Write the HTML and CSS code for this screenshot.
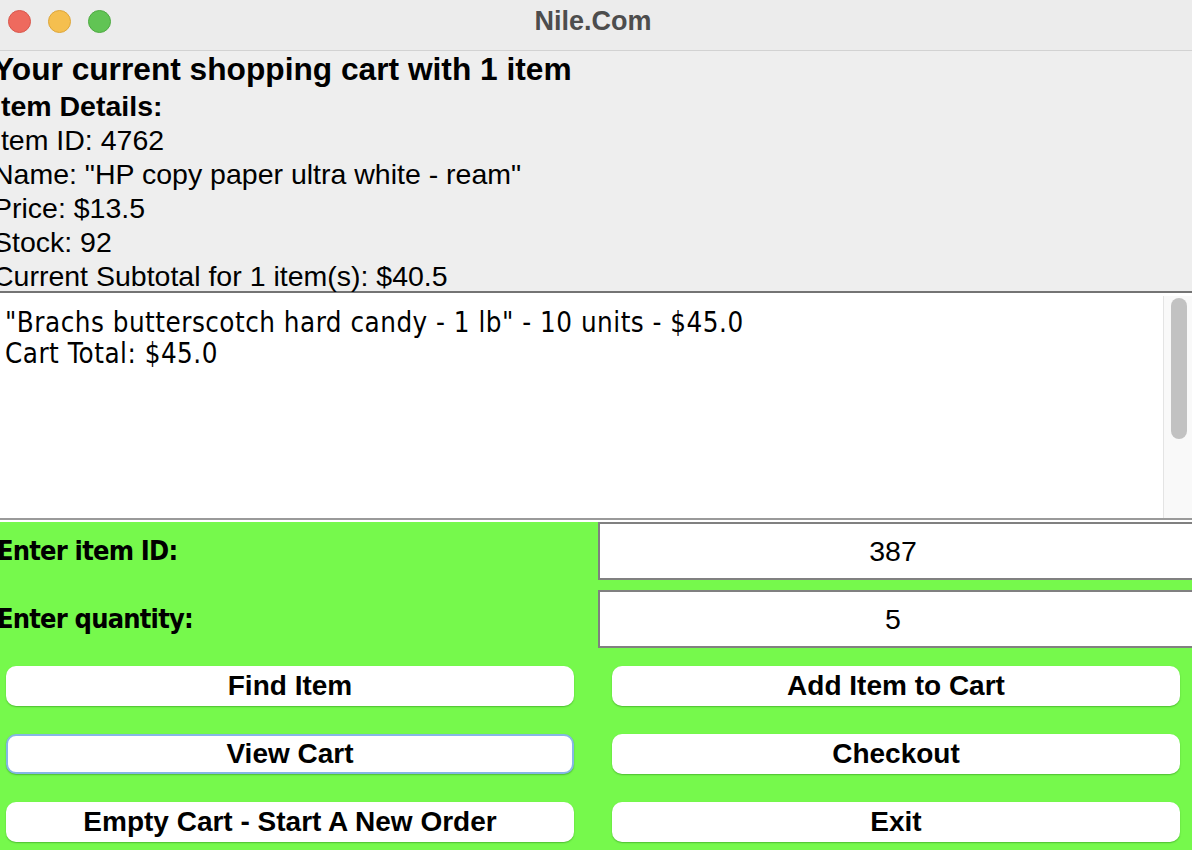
FILE: index.html
```html
<!DOCTYPE html>
<html lang="en">
<head>
<meta charset="utf-8">
<title>Nile.Com</title>
<link rel="stylesheet" href="styles.css">
</head>
<body>
<div class="window">
  <header class="titlebar">
    <div class="lights">
      <span class="light red"></span>
      <span class="light yellow"></span>
      <span class="light green"></span>
    </div>
    <div class="title">Nile.Com</div>
    <div></div>
  </header>

  <section class="details">
    <div class="heading">Your current shopping cart with 1 item</div>
    <div class="line bold">Item Details:</div>
    <div class="line">Item ID: 4762</div>
    <div class="line">Name: "HP copy paper ultra white - ream"</div>
    <div class="line">Price: $13.5</div>
    <div class="line">Stock: 92</div>
    <div class="line">Current Subtotal for 1 item(s): $40.5</div>
  </section>

  <section class="cart">
    <div class="cart-text">
      <div class="cart-line">"Brachs butterscotch hard candy - 1 lb" - 10 units - $45.0</div>
      <div class="cart-line">Cart Total: $45.0</div>
    </div>
    <div class="scrollbar"><div class="thumb"></div></div>
  </section>

  <section class="form">
    <div class="fields">
      <div class="label">Enter item ID:</div>
      <div class="field">387</div>
      <div class="label">Enter quantity:</div>
      <div class="field">5</div>
    </div>
    <div class="buttons">
      <div class="btn">Find Item</div>
      <div class="btn">Add Item to Cart</div>
      <div class="btn focused">View Cart</div>
      <div class="btn">Checkout</div>
      <div class="btn">Empty Cart - Start A New Order</div>
      <div class="btn">Exit</div>
    </div>
  </section>
</div>
</body>
</html>
```

FILE: styles.css
```css
html, body {
  margin: 0;
  padding: 0;
}
body {
  width: 1192px;
  height: 850px;
  overflow: hidden;
  background: #eeeeee;
  font-family: "Liberation Sans", Arial, sans-serif;
  color: #000;
}
.window {
  width: 1192px;
  height: 850px;
  overflow: hidden;
  display: flex;
  flex-direction: column;
}

/* title bar */
.titlebar {
  height: 50px;
  flex: 0 0 50px;
  background: #ececec;
  border-bottom: 1px solid #d2d2d2;
  display: grid;
  grid-template-columns: 1fr auto 1fr;
  align-items: start;
}
.lights {
  height: 43px;
  display: flex;
  align-items: center;
  gap: 17px;
  padding-left: 8px;
}
.light {
  width: 23px;
  height: 23px;
  border-radius: 50%;
  box-sizing: border-box;
}
.red { background: #ee6a5e; border: 1px solid #d9574c; }
.yellow { background: #f5bf4f; border: 1px solid #dea63a; }
.green { background: #61c454; border: 1px solid #4eaa42; }
.title {
  font-weight: bold;
  font-size: 27px;
  line-height: 42px;
  color: #4d4d4d;
  margin-right: 6px;
}

/* details */
.details {
  height: 240px;
  flex: 0 0 240px;
  background: #eeeeee;
  border-bottom: 2px solid #747474;
  margin-left: -7px;
  white-space: nowrap;
}
.heading {
  font-weight: bold;
  font-size: 31.7px;
  line-height: 36px;
  margin-bottom: 2px;
}
.line {
  font-size: 28.5px;
  line-height: 34px;
}
.line.bold { font-weight: bold; }

/* cart text area */
.cart {
  height: 225px;
  flex: 0 0 225px;
  background: #ffffff;
  border-bottom: 2px solid #9a9a9a;
  display: flex;
}
.cart-text {
  flex: 1;
  padding-top: 14px;
  padding-left: 5px;
  font-family: "DejaVu Sans Condensed", "DejaVu Sans", sans-serif;
  font-size: 27.5px;
  letter-spacing: 0.5px;
  line-height: 31px;
  white-space: nowrap;
}
.scrollbar {
  width: 29px;
  flex: 0 0 29px;
  margin-top: 3px;
  background: #f9f9f9;
  border-left: 1px solid #e4e4e4;
  padding: 2px 0 0 7px;
  box-sizing: border-box;
}
.thumb {
  width: 16px;
  height: 141px;
  border-radius: 8px;
  background: #c2c2c2;
}

/* green form */
.form {
  flex: 1;
  background: #76f94c;
  border-top: 2px solid #ffffff;
}
.fields {
  display: grid;
  grid-template-columns: 598px 600px;
  grid-auto-rows: 58px;
  row-gap: 10px;
}
.label {
  font-family: "DejaVu Sans Condensed", "DejaVu Sans", sans-serif;
  font-weight: bold;
  font-size: 27px;
  letter-spacing: -0.8px;
  line-height: 58px;
  margin-left: -3px;
  white-space: nowrap;
}
.field {
  background: #ffffff;
  border: 2px solid #808080;
  font-size: 28.5px;
  line-height: 54px;
  text-align: center;
  padding-right: 10px;
}
.buttons {
  display: grid;
  grid-template-columns: 568px 568px;
  grid-auto-rows: 40px;
  column-gap: 38px;
  row-gap: 28px;
  padding-left: 6px;
  margin-top: 18px;
}
.btn {
  background: #ffffff;
  border-radius: 10px;
  box-shadow: 0 1px 1.5px rgba(0, 80, 0, 0.35);
  font-weight: bold;
  font-size: 28px;
  line-height: 40px;
  text-align: center;
  white-space: nowrap;
  box-sizing: border-box;
}
.btn.focused {
  border: 2px solid #86b6e6;
  line-height: 36px;
}
```
